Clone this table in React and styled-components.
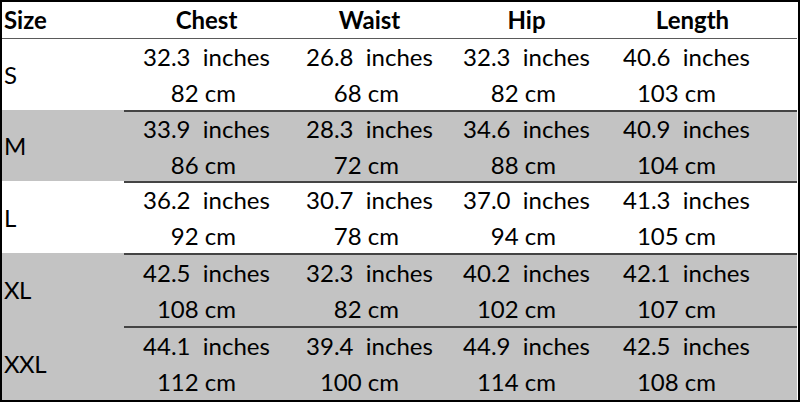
import { Fragment } from "react";
import styled, { createGlobalStyle } from "styled-components";

const GlobalStyle = createGlobalStyle`
  html, body {
    margin: 0;
    padding: 0;
    background: #fff;
  }
  body {
    font-family: Lato, "Liberation Sans", sans-serif;
    color: #000;
  }
`;

const Sheet = styled.div`
  width: 800px;
  height: 402px;
  box-sizing: border-box;
  border: 2px solid #000;
  padding: 0 1px 1px 0;
  background: #fff;
  display: grid;
  grid-template-columns: 122px 163px 157px 160px 1fr;
  grid-template-rows: 37px 71px 71px 72px 73px 1fr;
`;

const HeadCell = styled.div`
  display: flex;
  align-items: center;
  padding-left: ${(p) => (p.$size ? "2px" : "16px")};
  border-bottom: 1px solid #5a5a5a;
  font-size: 24px;
  font-weight: 700;
  line-height: 1;
`;

const HeadLabel = styled.span`
  width: 133px;
  text-align: center;
  margin-left: ${(p) => p.$shift || 0}px;
`;

const SizeCell = styled.div`
  display: flex;
  align-items: center;
  padding-left: 2px;
  background: ${(p) => (p.$shade ? "#c3c3c3" : "#fff")};
  font-size: 24px;
  letter-spacing: -0.5px;
`;

const DataCell = styled.div`
  display: flex;
  flex-direction: column;
  justify-content: center;
  padding-left: 16px;
  box-sizing: border-box;
  background: ${(p) => (p.$shade ? "#c3c3c3" : "#fff")};
  border-top: ${(p) => (p.$first ? "none" : "2px solid #444")};
  font-size: 24px;
`;

const Block = styled.div`
  width: 133px;
`;

const InchLine = styled.div`
  line-height: 36px;
  text-align: center;
  white-space: pre;
`;

const CmLine = styled.div`
  line-height: 36px;
  text-align: right;
  padding-right: 37px;
  white-space: pre;
`;

const columns = ["Chest", "Waist", "Hip", "Length"];

const rows = [
  { size: "S", shade: false, values: [["32.3", 82], ["26.8", 68], ["32.3", 82], ["40.6", 103]] },
  { size: "M", shade: true, values: [["33.9", 86], ["28.3", 72], ["34.6", 88], ["40.9", 104]] },
  { size: "L", shade: false, values: [["36.2", 92], ["30.7", 78], ["37.0", 94], ["41.3", 105]] },
  { size: "XL", shade: true, values: [["42.5", 108], ["32.3", 82], ["40.2", 102], ["42.1", 107]] },
  { size: "XXL", shade: true, values: [["44.1", 112], ["39.4", 100], ["44.9", 114], ["42.5", 108]] },
];

export default function App() {
  return (
    <>
      <GlobalStyle />
      <Sheet>
        <HeadCell $size>Size</HeadCell>
        {columns.map((c) => (
          <HeadCell key={c}>
            <HeadLabel $shift={c === "Length" ? 6 : 0}>{c}</HeadLabel>
          </HeadCell>
        ))}
        {rows.map((r, i) => (
          <Fragment key={r.size}>
            <SizeCell $shade={r.shade}>{r.size}</SizeCell>
            {r.values.map(([inch, cm], j) => (
              <DataCell key={j} $shade={r.shade} $first={i === 0}>
                <Block>
                  <InchLine>{`${inch}  inches`}</InchLine>
                  <CmLine>{`${cm} cm`}</CmLine>
                </Block>
              </DataCell>
            ))}
          </Fragment>
        ))}
      </Sheet>
    </>
  );
}
